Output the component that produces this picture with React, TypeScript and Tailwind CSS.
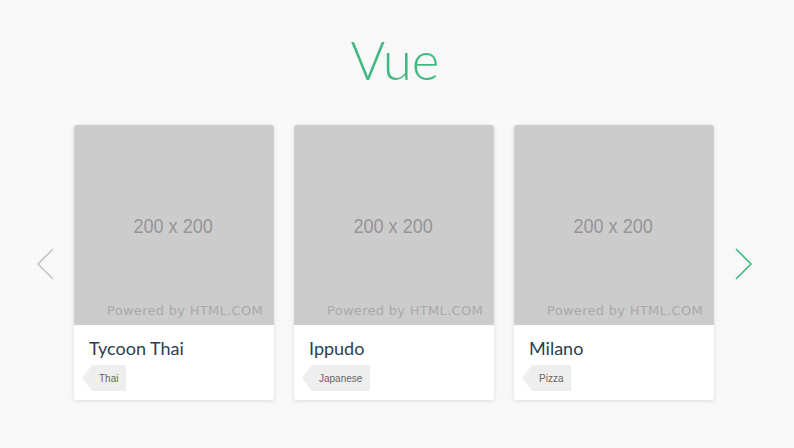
import React from 'react'

const restaurants = [
  { name: 'Tycoon Thai', tag: 'Thai' },
  { name: 'Ippudo', tag: 'Japanese' },
  { name: 'Milano', tag: 'Pizza' },
]

const Chevron: React.FC<{ dir: 'left' | 'right'; color: string }> = ({ dir, color }) => (
  <svg width="20" height="34" viewBox="0 0 20 34" fill="none">
    <path
      d={dir === 'left' ? 'M17 2 L2 17 L17 32' : 'M3 2 L18 17 L3 32'}
      stroke={color}
      strokeWidth="1.6"
    />
  </svg>
)

const App: React.FC = () => {
  return (
    <div className="w-[794px] h-[448px] bg-[#f8f8f8] overflow-hidden font-['Lato',sans-serif]">
      <h1 className="text-center text-[#42b983] text-[53px] font-light leading-none pt-[33px] h-[125px] pr-[4px]">
        Vue
      </h1>

      <div className="flex items-center">
        <div className="w-[74px] flex justify-end pr-[18px] pt-[2px]">
          <Chevron dir="left" color="#c4c4c4" />
        </div>

        <div className="flex gap-5">
          {restaurants.map((r) => (
            <div
              key={r.name}
              className="w-[200px] bg-white rounded-[3px] overflow-hidden shadow-[0_1px_4px_rgba(0,0,0,0.12)]"
            >
              <div className="relative h-[200px] bg-[#cccccc] flex items-center justify-center">
                <span className="text-[#969696] text-[21px] font-['Liberation_Sans',sans-serif] scale-x-[0.86] mt-[2px] mr-[2px]">
                  200 x 200
                </span>
                <span className="absolute right-[11px] bottom-[5px] text-[#a9a9a9] text-[13px] font-['DejaVu_Sans',sans-serif] tracking-[0.3px]">
                  Powered by HTML.COM
                </span>
              </div>
              <div className="h-[75px] px-[15px] pt-[12px]">
                <div className="text-[#2c3e50] text-[18px] leading-[22px]">{r.name}</div>
                <div className="flex mt-[6px] -ml-[7px]">
                  <div className="w-0 h-0 border-y-[13px] border-y-transparent border-r-[10px] border-r-[#eeeeee]" />
                  <div className="h-[26px] bg-[#eeeeee] pl-[7px] pr-[8px] flex items-center text-[10px] text-[#666] font-['Liberation_Sans',sans-serif]">
                    {r.tag}
                  </div>
                </div>
              </div>
            </div>
          ))}
        </div>

        <div className="flex-1 flex pl-[19px] pt-[2px]">
          <Chevron dir="right" color="#42b983" />
        </div>
      </div>
    </div>
  )
}

export default App
